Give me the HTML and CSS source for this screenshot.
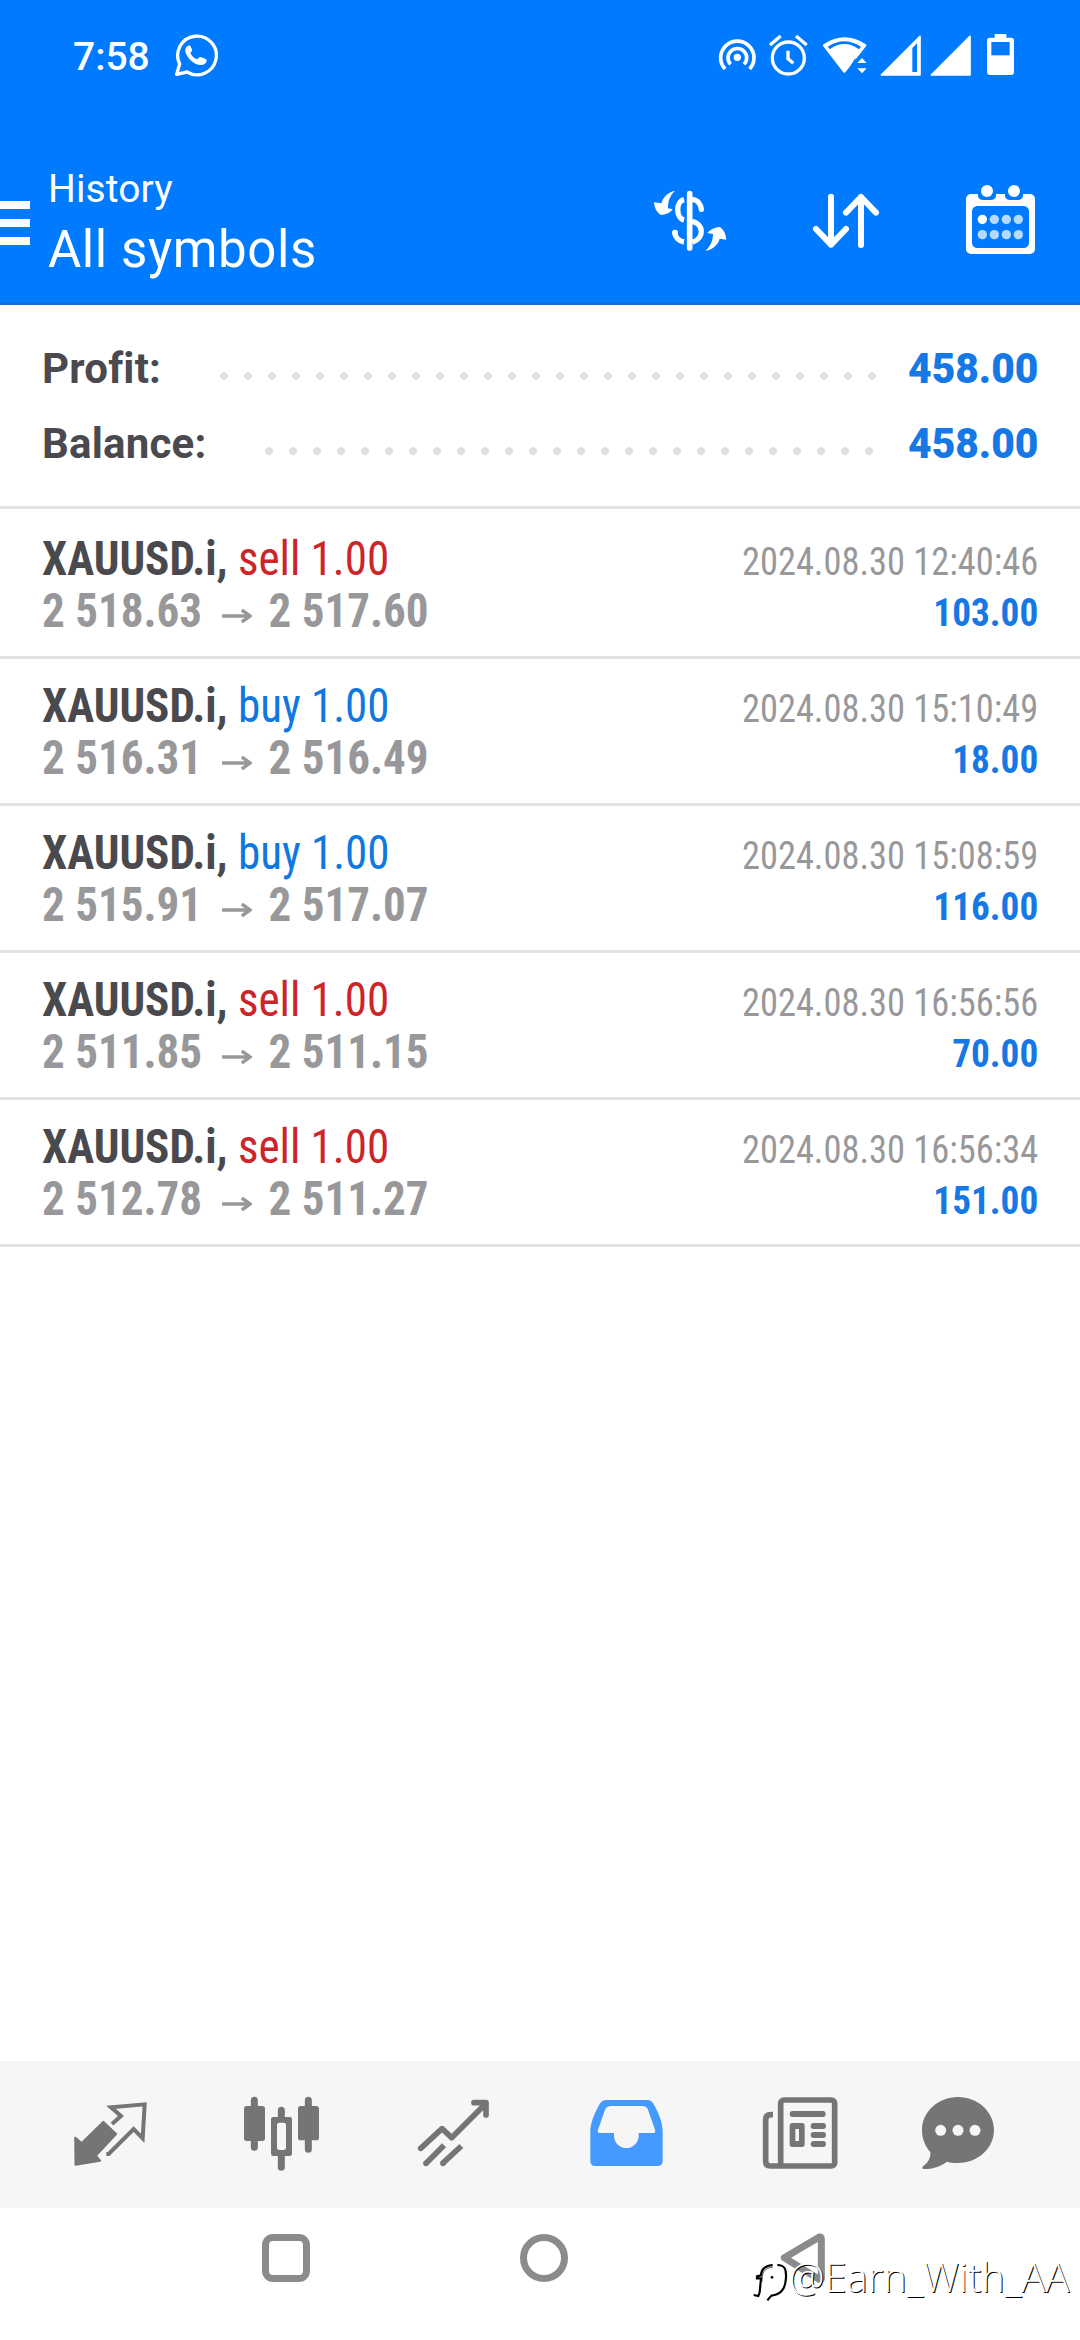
FILE: index.html
```html
<!DOCTYPE html>
<html lang="en">
<head>
<meta charset="utf-8">
<title>History</title>
<link rel="stylesheet" href="styles.css">
</head>
<body>
<div class="screen">
  <header class="header">
    <div class="status">
      <span class="clock">7:58</span>
      <svg class="whatsapp" viewBox="522 99 132 132" width="44" height="44"><path d="M530 223 539 192A58 58 0 1 1 561 216Z" fill="none" stroke="#fff" stroke-width="10" stroke-linejoin="round"/><path d="M564 138c-9 4-10 13-5 25 8 17 22 29 40 32 12 1 20-4 21-13 0-3-1-4-3-5l-15-6c-4-1-6 4-11 7-10-4-16-10-20-19 3-4 7-6 5-11l-5-10c-1-2-4-2-7 0Z" fill="#fff"/></svg>
      <div class="tray">
        <svg viewBox="84 39 120 132" width="40" height="44"><g fill="none" stroke="#fff" stroke-width="11"><path d="M105 147A50 50 0 1 1 179 147"/><path d="M122 133A28 28 0 1 1 162 133"/></g><circle cx="142" cy="112" r="11" fill="#fff"/></svg>
        <svg class="alarm" viewBox="234 39 120 132" width="40" height="44"><g fill="none" stroke="#fff" stroke-width="10"><circle cx="295" cy="114" r="48"/><path d="M240 75 272 48M318 48 350 75M294 92V116L310 130"/></g></svg>
        <svg class="wifi" viewBox="396 39 138 132" width="46" height="44"><path d="M403 76Q464 36 525 76L463 154Z" fill="#fff" stroke="#fff" stroke-width="8" stroke-linejoin="round"/><path d="M413 80Q463 47 513 80L507 88Q463 56 419 88Z" fill="#007aff"/><path d="M496 113V160H480V140Z" fill="#007aff"/><path d="M502 129 516 114 530 129ZM502 145H530L516 160Z" fill="#fff"/></svg>
        <svg class="signal" viewBox="570 39 126 132" width="42" height="44"><path d="M574 165 690 49V165Z" fill="#fff" stroke="#fff" stroke-width="5" stroke-linejoin="round"/><path d="M667 84 681 70V156H667Z" fill="#007aff"/></svg>
        <svg class="signal2" viewBox="720 39 126 132" width="42" height="44"><path d="M724 165 840 49V165Z" fill="#fff" stroke="#fff" stroke-width="5" stroke-linejoin="round"/></svg>
        <svg class="battery" viewBox="888 39 87 132" width="29" height="44"><path d="M914 42H949V53H963Q972 53 972 62V156Q972 165 963 165H900Q891 165 891 156V62Q891 53 900 53H914Z" fill="#fff"/><path d="M904 66H959V106H904Z" fill="#007aff"/></svg>
      </div>
    </div>
    <div class="toolbar">
      <div class="menu"><i></i><i></i><i></i></div>
      <div class="titles">
        <div class="subtitle">History</div>
        <div class="title">All symbols</div>
      </div>
      <div class="actions">
        <svg viewBox="84 87 252 252" width="84" height="84"><path d="M209 131V294" stroke="#fff" stroke-width="17" stroke-linecap="round"/><g fill="none" stroke="#fff" stroke-width="16"><path d="M192 149C167 155 167 203 192 210"/><path d="M164 248C166 263 177 274 192 276"/><path d="M218 149C233 150 242 162 244 178" stroke-linecap="round"/><path d="M216 214C250 220 256 264 217 277"/></g><circle cx="165" cy="248" r="9" fill="#fff"/><path d="M165 122C143 127 130 140 124 160L102 157C103 174 110 187 122 195 136 194 149 190 158 178L144 175C144 151 151 136 165 122Z" fill="#fff"/><path d="M256 303C280 298 294 284 299 266L319 269C318 252 311 239 300 231 285 232 271 238 262 249L279 252C279 273 270 290 256 303Z" fill="#fff"/></svg>
        <svg class="sort" viewBox="552 87 252 252" width="84" height="84"><path d="M633 140V284M588 237 633 284 678 237M723 285V141M678 188 723 141 768 188" fill="none" stroke="#fff" stroke-width="18" stroke-linecap="round" stroke-linejoin="round"/></svg>
        <svg class="calendar" viewBox="1014 87 252 252" width="84" height="84"><rect x="1038" y="132" width="207" height="180" rx="15" fill="#fff"/><g fill="#007aff"><path d="M1074 130H1128V138Q1126 150 1112 150H1090Q1076 150 1074 138ZM1155 130H1209V138Q1207 150 1193 150H1171Q1157 150 1155 138Z"/><rect x="1056" y="168" width="171" height="126" rx="16"/></g><g fill="#fff"><circle cx="1101" cy="123" r="18"/><circle cx="1182" cy="123" r="18"/><circle cx="1087" cy="208" r="14"/></g><g fill="#b5dcff"><circle cx="1123" cy="208" r="14"/><circle cx="1159" cy="208" r="14"/><circle cx="1195" cy="208" r="14"/><circle cx="1087" cy="254" r="14"/><circle cx="1123" cy="254" r="14"/><circle cx="1159" cy="254" r="14"/><circle cx="1195" cy="254" r="14"/></g></svg>
      </div>
    </div>
  </header>

  <section class="summary">
    <div class="total"><span>Profit:</span><i class="dots dots-profit"></i><b>458.00</b></div>
    <div class="total"><span>Balance:</span><i class="dots dots-balance"></i><b>458.00</b></div>
  </section>

  <main class="deals">
    <div class="deal"><div class="left"><div class="name"><b>XAUUSD.i,</b> <span class="sell">sell 1.00</span></div><div class="price"><span>2 518.63</span><svg class="arrow" viewBox="0 0 32 14" width="32" height="14"><path d="M0 7H30M21 1 30 7 21 13"/></svg><span>2 517.60</span></div></div><div class="right"><div class="date">2024.08.30 12:40:46</div><div class="amount">103.00</div></div></div>
    <div class="deal"><div class="left"><div class="name"><b>XAUUSD.i,</b> <span class="buy">buy 1.00</span></div><div class="price"><span>2 516.31</span><svg class="arrow" viewBox="0 0 32 14" width="32" height="14"><path d="M0 7H30M21 1 30 7 21 13"/></svg><span>2 516.49</span></div></div><div class="right"><div class="date">2024.08.30 15:10:49</div><div class="amount">18.00</div></div></div>
    <div class="deal"><div class="left"><div class="name"><b>XAUUSD.i,</b> <span class="buy">buy 1.00</span></div><div class="price"><span>2 515.91</span><svg class="arrow" viewBox="0 0 32 14" width="32" height="14"><path d="M0 7H30M21 1 30 7 21 13"/></svg><span>2 517.07</span></div></div><div class="right"><div class="date">2024.08.30 15:08:59</div><div class="amount">116.00</div></div></div>
    <div class="deal"><div class="left"><div class="name"><b>XAUUSD.i,</b> <span class="sell">sell 1.00</span></div><div class="price"><span>2 511.85</span><svg class="arrow" viewBox="0 0 32 14" width="32" height="14"><path d="M0 7H30M21 1 30 7 21 13"/></svg><span>2 511.15</span></div></div><div class="right"><div class="date">2024.08.30 16:56:56</div><div class="amount">70.00</div></div></div>
    <div class="deal"><div class="left"><div class="name"><b>XAUUSD.i,</b> <span class="sell">sell 1.00</span></div><div class="price"><span>2 512.78</span><svg class="arrow" viewBox="0 0 32 14" width="32" height="14"><path d="M0 7H30M21 1 30 7 21 13"/></svg><span>2 511.27</span></div></div><div class="right"><div class="date">2024.08.30 16:56:34</div><div class="amount">151.00</div></div></div>
  </main>

  <nav class="tabs">
    <svg viewBox="84 126 252 252" width="84" height="84"><path d="M216 222 243 198 213 172 314 163 308 265 281 237 206 312 199 312" fill="none" stroke="#757575" stroke-width="12"/><path d="M106 264 125 280 190 216 228 252 167 317 180 332 107 344Z" fill="#757575" stroke="#757575" stroke-width="7" stroke-linejoin="round"/></svg>
    <svg viewBox="600 126 252 252" width="84" height="84"><g stroke="#757575" stroke-width="21" stroke-linecap="round"><path d="M643 151V292M724 181V205M724 315V352M805 151V298"/></g><rect x="612" y="168" width="63" height="105" rx="8" fill="#757575"/><rect x="774" y="168" width="63" height="103" rx="8" fill="#757575"/><path fill-rule="evenodd" d="M700 201H749Q756 201 756 208V311Q756 318 749 318H700Q693 318 693 311V208Q693 201 700 201ZM718 218Q711 218 711 225V293Q711 300 718 300H731Q738 300 738 293V225Q738 218 731 218Z" fill="#757575"/></svg>
    <svg viewBox="1116 126 252 252" width="84" height="84"><g fill="none" stroke="#757575" stroke-width="17" stroke-linejoin="round"><path stroke-linecap="round" d="M1142 295 1206 236 1235 263 1337 161M1302 158H1338V195"/><path d="M1212 286 1157 341M1264 288 1207 341"/></g><circle cx="1158" cy="340" r="8.500" fill="#757575"/><circle cx="1209" cy="340" r="8.500" fill="#757575"/></svg>
    <svg viewBox="72 126 252 252" width="84" height="84"><path fill-rule="evenodd" d="M137 150H264Q273 150 279 159C296 187 308 219 308 245V333Q308 348 293 348H106Q91 348 91 333V245C91 219 104 187 121 159Q127 150 137 150ZM153 168Q140 168 135 179L114 239Q111 249 121 249H162V257A37 37 0 0 0 236 257V249H276Q289 249 285 239L264 179Q260 168 247 168Z" fill="#449aff"/></svg>
    <svg class="news" viewBox="594 126 252 252" width="84" height="84"><g fill="none" stroke="#757575" stroke-width="17"><rect x="662" y="150" width="162" height="198" rx="10"/><path d="M639 194H633Q617 194 617 209V334Q617 348 631 348H670"/></g><g stroke="#757575" stroke-width="18" stroke-linecap="round"><path d="M698 192H788M761 228H789M761 255H789M761 282H789"/></g><path fill-rule="evenodd" d="M697 219H726Q734 219 734 227V283Q734 291 726 291H697Q689 291 689 283V227Q689 219 697 219ZM706 237V273H717V237Z" fill="#757575"/></svg>
    <svg class="chat" viewBox="1068 126 252 252" width="84" height="84"><path d="M1194 141C1254 141 1302 186 1302 240S1254 339 1194 339C1182 339 1170 338 1161 335C1140 350 1115 358 1090 357Q1084 355 1089 349C1105 337 1113 322 1111 306C1096 290 1086 267 1086 240C1086 186 1134 141 1194 141Z" fill="#757575"/><g fill="#f6f6f6"><circle cx="1142" cy="241" r="16.500"/><circle cx="1194" cy="241" r="16.500"/><circle cx="1245" cy="241" r="16.500"/></g></svg>
  </nav>
  <footer class="system">
    <div class="recent"></div>
    <div class="home"></div>
    <svg class="back" viewBox="180 99 138 150" width="46" height="50"><path d="M193 173 298 111Q304 110 304 117V237Q302 241 296 237Z" fill="none" stroke="#8b8b8b" stroke-width="21" stroke-linejoin="round"/></svg>
  </footer>
  <div class="watermark">
    <svg viewBox="99 190 108 120" width="36" height="40"><path d="M101 289 115 292 119 281 123 239H111V233L123 230C124 211 134 201 158 199M172 199C195 200 199 211 198 237C196 276 180 287 154 291L142 305" fill="none" stroke="#000" stroke-width="6.500"/><path d="M126 249C126 222 131 208 159 205" fill="none" stroke="#000" stroke-width="2"/><circle cx="156" cy="236" r="4" fill="#000"/></svg>
    <span class="handle">@Earn_With_AA</span>
  </div>
</div>
</body>
</html>
```
FILE: styles.css
```css
* { box-sizing: border-box; }
body { margin: 0; font-family: Roboto, "Liberation Sans", sans-serif; }
svg { display: block; flex: none; }
.screen { position: relative; width: 1080px; height: 2340px; background: #fff; overflow: hidden; display: flex; flex-direction: column; }

.header { height: 305px; background: #007aff; color: #fff; border-bottom: 2px solid #1a6dc9; flex: none; }
.status { height: 110px; display: flex; align-items: center; padding: 0 65px 0 73px; }
.clock { font-size: 39px; font-weight: 500; line-height: 44px; width: 101px; padding-top: 3px; }
.tray { display: flex; margin-left: auto; }
.alarm { margin-left: 10px; }
.wifi { margin-left: 14px; }
.signal { margin-left: 12px; }
.signal2 { margin-left: 8px; }
.battery { margin-left: 14px; }
.toolbar { display: flex; padding-right: 38px; }
.menu { width: 30px; padding-top: 91px; display: flex; flex-direction: column; gap: 10px; }
.menu i { height: 8px; background: #fff; }
.titles { padding: 54px 0 0 18px; }
.subtitle { font-size: 39px; line-height: 50px; letter-spacing: 0.1px; }
.title { font-size: 51px; line-height: 60px; padding-top: 6px; letter-spacing: 0.6px; }
.actions { display: flex; margin-left: auto; padding-top: 69px; }
.sort { margin-left: 72px; }
.calendar { margin-left: 70px; }

.summary { height: 204px; border-bottom: 3px solid #e4e4e4; padding: 26px 42px 0 42px; color: #4a4a4e; font-size: 42px; font-weight: 700; flex: none; }
.total { height: 75px; display: flex; align-items: center; line-height: 75px; }
.total span { letter-spacing: 0.2px; }
.total b { color: #1678e5; transform: scaleX(0.97); transform-origin: right; }
.dots { height: 24px; margin-left: auto; margin-right: 20px; margin-top: 15px; background: radial-gradient(circle, #e0e0e0 3.500px, transparent 4.300px) 0 0 / 24px 24px; }
.dots-profit { width: 672px; }
.dots-balance { width: 624px; margin-right: 23px; }

.deals { padding-top: 3px; font-stretch: 75%; }
.deal { height: 147px; border-bottom: 3px solid #e4e4e4; padding: 22px 42px 0; display: flex; justify-content: space-between; }
.left { transform: scaleX(0.938); transform-origin: left; }
.name, .price { font-size: 48px; line-height: 51px; height: 51px; white-space: pre; }
.name { line-height: 50px; }
.name b { color: #4a4a4e; }
.sell { color: #cb2529; }
.buy { color: #0f78e0; }
.price { color: #98989b; font-weight: 700; display: flex; }
.arrow { margin: 24px 18px 0 21px; fill: none; stroke: #98989b; stroke-width: 3.500; }
.right { text-align: right; font-size: 39px; }
.date { color: #98989b; line-height: 50px; padding-top: 3px; transform: scaleX(0.934); transform-origin: right; }
.amount { color: #1678e5; font-weight: 700; line-height: 52px; transform: scaleX(0.955); transform-origin: right; }

.tabs { height: 147px; margin-top: auto; background: #f6f6f6; display: flex; gap: 88px; padding: 31px 0 0 68px; flex: none; }
.news { margin-left: 2px; }
.chat { margin-left: -14px; }
.system { height: 132px; display: flex; padding: 26px 0 0 262px; flex: none; }
.recent, .home { width: 48px; height: 48px; border: 7px solid #8b8b8b; border-radius: 11px; }
.home { border-radius: 50%; margin-left: 210px; }
.back { margin: -1px 0 0 212px; }
.watermark { position: absolute; left: 753px; top: 2262px; display: flex; }
.handle { font: 300 41px/40px "Open Sans", "Noto Sans", sans-serif; color: #fff; text-shadow: 1px 1px 0 #000; white-space: nowrap; margin-top: -6px; transform: scaleX(0.975); transform-origin: left; }
```
